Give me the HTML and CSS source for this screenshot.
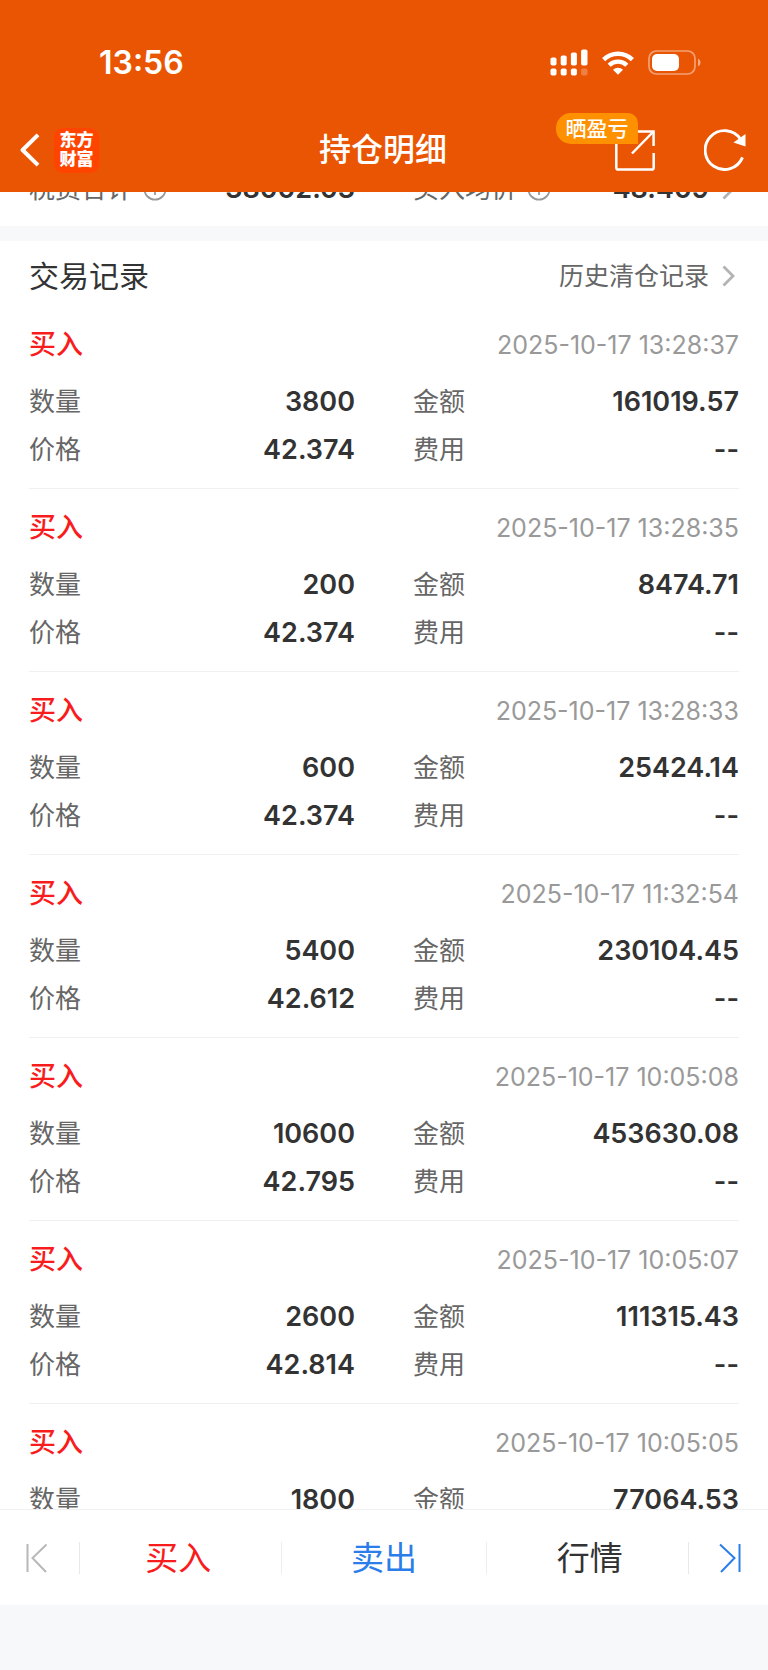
FILE: index.html
```html
<!DOCTYPE html>
<html lang="zh-CN">
<head>
  <meta charset="UTF-8" />
  <meta name="viewport" content="width=device-width, initial-scale=1" />
  <title>持仓明细</title>
  <link rel="stylesheet" href="styles.css">
</head>
<body>
  <header id="header">
    <div class="status-bar">
      <span class="clock">13:56</span>
      <div class="status-icons">
        <svg width="38" height="27" viewBox="0 0 38 27" fill="#fff">
          <rect x="0.5" y="8.5" width="6" height="8" rx="1.8" />
          <rect x="10.7" y="6.5" width="6" height="10" rx="1.8" />
          <rect x="20.9" y="3.5" width="6" height="13" rx="1.8" />
          <rect x="31.1" y="0.5" width="6.4" height="16" rx="1.8" />
          <rect x="0.5" y="19.5" width="6" height="7" rx="1.8" />
          <rect x="10.7" y="19.5" width="6" height="7" rx="1.8" />
          <rect x="20.9" y="19.5" width="6" height="7" rx="1.8" />
          <rect x="31.1" y="19.5" width="6.4" height="7" rx="1.8" opacity="0.25" />
        </svg>
        <svg width="32" height="24" viewBox="0 0 32 24" fill="none" stroke="#fff" stroke-width="4.4">
          <path d="M1.6 8.6 A20.5 20.5 0 0 1 30.4 8.6" />
          <path d="M7.2 14.2 A12.6 12.6 0 0 1 24.8 14.2" />
          <path d="M16 23.8 L11 18.8 A7.2 7.2 0 0 1 21 18.8 Z" fill="#fff" stroke="none" />
        </svg>
        <svg width="53" height="25" viewBox="0 0 53 25">
          <rect x="1" y="1" width="46" height="23" rx="7.5" fill="none" stroke="#fff" stroke-opacity="0.45" stroke-width="1.7" />
          <rect x="4" y="4" width="27" height="17" rx="5" fill="#fff" />
          <path d="M50 8.5 Q52.6 10 52.6 12.5 Q52.6 15 50 16.5 Z" fill="#fff" fill-opacity="0.5" />
        </svg>
      </div>
    </div>
    <nav class="nav-bar">
      <div class="nav-left">
        <button class="icon-button" type="button" aria-label="返回">
          <svg width="20" height="34" viewBox="0 0 20 34" fill="none" stroke="#fff" stroke-width="4">
            <path d="M18 1.8 L2.6 17 L18 32.2" stroke-linejoin="round" />
          </svg>
        </button>
        <div class="logo"><span>东方</span><span>财富</span></div>
      </div>
      <h1 class="title">持仓明细</h1>
      <div class="nav-right">
        <button class="icon-button share" type="button" aria-label="晒盈亏">
          <svg width="40" height="41" viewBox="0 0 40 41" fill="none" stroke="#fff" stroke-width="2.5">
            <path d="M1.3 12 V37.4 Q1.3 39.5 3.4 39.5 H36.6 Q38.7 39.5 38.7 37.4 V23" />
            <path d="M23 1.6 H38.6 V16" />
            <path d="M17 23.5 L38 2" />
          </svg>
          <span class="badge">晒盈亏</span>
        </button>
        <button class="icon-button" type="button" aria-label="刷新">
          <svg width="42" height="42" viewBox="0 0 42 42" fill="none" stroke="#fff" stroke-width="2.9">
            <path d="M38.5 28.4 A19.4 19.4 0 1 1 36.6 10.2" />
            <path d="M41.5 5 V17.5 L29.5 13.5 Z" fill="#fff" stroke="none" />
          </svg>
        </button>
      </div>
    </nav>
  </header>

  <main id="content">
    <section class="summary">
      <div class="cell">
        <span class="label">税费合计</span>
        <svg class="info" width="24" height="24" viewBox="0 0 24 24" fill="none" stroke="#999" stroke-width="1.8">
          <circle cx="12" cy="12" r="10.6" />
          <path d="M12 10.5 V18 M12 6.5 V8.5" />
        </svg>
        <span class="value">38002.03</span>
      </div>
      <div class="cell">
        <span class="label">买入均价</span>
        <svg class="info" width="24" height="24" viewBox="0 0 24 24" fill="none" stroke="#999" stroke-width="1.8">
          <circle cx="12" cy="12" r="10.6" />
          <path d="M12 10.5 V18 M12 6.5 V8.5" />
        </svg>
        <span class="value">48.409</span>
        <svg class="arrow" width="13" height="22" viewBox="0 0 13 22" fill="none" stroke="#b3b3b3" stroke-width="2.8">
          <path d="M1.5 1.5 L11 11 L1.5 20.5" />
        </svg>
      </div>
    </section>

    <section class="records">
      <div class="records-head">
        <h2>交易记录</h2>
        <a href="#history" class="history">历史清仓记录
          <svg class="arrow" width="13" height="22" viewBox="0 0 13 22" fill="none" stroke="#b3b3b3" stroke-width="2.8">
            <path d="M1.5 1.5 L11 11 L1.5 20.5" />
          </svg>
        </a>
      </div>
      <div id="record-list"></div>
    </section>
  </main>

  <footer id="toolbar">
    <button class="step prev" type="button" aria-label="上一个" disabled>
      <svg width="22" height="30" viewBox="0 0 22 30" fill="none" stroke="#b8b8b8" stroke-width="2">
        <path d="M1.5 1 V29 M20.5 1.5 L6.5 15 L20 29" />
      </svg>
    </button>
    <div class="actions">
      <button class="action buy" type="button">买入</button>
      <button class="action sell" type="button">卖出</button>
      <button class="action quote" type="button">行情</button>
    </div>
    <button class="step next" type="button" aria-label="下一个">
      <svg width="22" height="30" viewBox="0 0 22 30" fill="none" stroke="#2b7de9" stroke-width="2">
        <path d="M20.5 1 V29 M1 1.5 L15.5 15 L2 29" />
      </svg>
    </button>
  </footer>

  <script src="script.js"></script>
</body>
</html>
```

FILE: styles.css
```css
* {
  box-sizing: border-box;
}

body {
  margin: 0;
  height: 100vh;
  display: flex;
  flex-direction: column;
  background-color: #f6f8fa;
  color: #333;
  font-family: Inter, "Noto Sans CJK SC", sans-serif;
  font-size: 26px;
  line-height: 32px;
}

button {
  padding: 0;
  border: none;
  background: none;
  font-family: inherit;
  cursor: pointer;
}

svg {
  display: block;
  flex: none;
}

/* header */
#header {
  flex: none;
  background-color: #ea5504;
  color: #fff;
}

.status-bar {
  display: flex;
  justify-content: space-between;
  align-items: center;
  height: 109px;
  padding: 16px 67px 0 99px;
}

.clock {
  font-size: 32px;
  font-weight: 600;
}

.status-icons {
  display: flex;
  align-items: center;
  gap: 14px;
}

.nav-bar {
  display: grid;
  grid-template-columns: 1fr auto 1fr;
  align-items: center;
  height: 83px;
  padding: 0 22px 1px 20px;
}

.nav-left,
.nav-right {
  display: flex;
  align-items: center;
}

.nav-left {
  gap: 14px;
}

.nav-right {
  justify-content: flex-end;
  gap: 49px;
}

.logo {
  display: flex;
  flex-direction: column;
  align-items: center;
  justify-content: center;
  width: 45px;
  height: 45px;
  border-radius: 9px;
  background-color: #ff4400;
  font-size: 17px;
  font-weight: 900;
  line-height: 19px;
}

.title {
  margin: 0;
  font-size: 32px;
  font-weight: 500;
}

.share {
  position: relative;
}

.badge {
  position: absolute;
  right: 17px;
  bottom: 27px;
  width: 82px;
  border-radius: 15px 10px 0 15px;
  background-color: #ff9100;
  color: #fff;
  font-size: 21px;
  font-weight: 500;
  line-height: 31px;
  text-align: center;
  white-space: nowrap;
}

/* content */
#content {
  flex: 1;
  min-height: 0;
  overflow: hidden;
}

.cell {
  display: flex;
  align-items: center;
  height: 48px;
}

.label {
  color: #666;
}

.value {
  margin-left: auto;
  font-size: 27px;
  font-weight: 600;
}

.summary {
  display: grid;
  grid-template-columns: 1fr 1fr;
  column-gap: 58px;
  margin-top: -27px;
  padding: 0 29px 13px;
  background-color: #fff;
}

.info {
  margin-left: 10px;
}

.arrow {
  margin: 0 4px 0 13px;
}

.records {
  margin-top: 15px;
  padding: 0 29px;
  background-color: #fff;
}

.records-head {
  display: flex;
  justify-content: space-between;
  align-items: center;
  height: 65px;
  padding-top: 5px;
}

.records-head h2 {
  margin: 0;
  font-size: 30px;
  font-weight: 400;
}

.history {
  display: flex;
  align-items: center;
  color: #666;
  font-size: 25px;
  text-decoration: none;
}

.record {
  padding: 20px 0 14px;
  border-bottom: 1px solid #f0f0f0;
}

.record-head {
  display: flex;
  justify-content: space-between;
  align-items: center;
  height: 38px;
  margin-bottom: 14px;
}

.side {
  color: #f91c1c;
  font-size: 27px;
  font-weight: 500;
}

.time {
  color: #999;
  font-size: 25px;
}

.record-body {
  display: grid;
  grid-template-columns: 1fr 1fr;
  column-gap: 58px;
}

/* bottom toolbar */
#toolbar {
  flex: none;
  display: flex;
  align-items: center;
  height: 96px;
  margin-bottom: 65px;
  border-top: 1px solid #f0f0f0;
  background-color: #fff;
}

.step {
  display: flex;
  align-items: center;
  width: 80px;
  height: 32px;
}

.prev {
  padding-left: 26px;
  border-right: 1px solid #e8e8e8;
}

.next {
  justify-content: flex-end;
  padding-right: 27px;
  border-left: 1px solid #e8e8e8;
}

.actions {
  flex: 1;
  display: flex;
  margin: 0 -4px;
}

.action {
  flex: 1;
  height: 32px;
  font-size: 33px;
  line-height: 32px;
}

.action + .action {
  border-left: 1px solid #eee;
}

.buy {
  color: #f91c1c;
}

.sell {
  color: #2b7de9;
}

.quote {
  color: #333;
}
```

FILE: script.js
```js
const records = [
  { time: "2025-10-17 13:28:37", count: "3800", amount: "161019.57", price: "42.374" },
  { time: "2025-10-17 13:28:35", count: "200", amount: "8474.71", price: "42.374" },
  { time: "2025-10-17 13:28:33", count: "600", amount: "25424.14", price: "42.374" },
  { time: "2025-10-17 11:32:54", count: "5400", amount: "230104.45", price: "42.612" },
  { time: "2025-10-17 10:05:08", count: "10600", amount: "453630.08", price: "42.795" },
  { time: "2025-10-17 10:05:07", count: "2600", amount: "111315.43", price: "42.814" },
  { time: "2025-10-17 10:05:05", count: "1800", amount: "77064.53", price: "42.814" }
];

function cell(label, value) {
  return `<div class="cell"><span class="label">${label}</span><span class="value">${value}</span></div>`;
}

document.getElementById("record-list").innerHTML = records.map(r => `
  <article class="record">
    <div class="record-head">
      <span class="side">买入</span>
      <time class="time">${r.time}</time>
    </div>
    <div class="record-body">
      ${cell("数量", r.count)}
      ${cell("金额", r.amount)}
      ${cell("价格", r.price)}
      ${cell("费用", "--")}
    </div>
  </article>
`).join("");
```
